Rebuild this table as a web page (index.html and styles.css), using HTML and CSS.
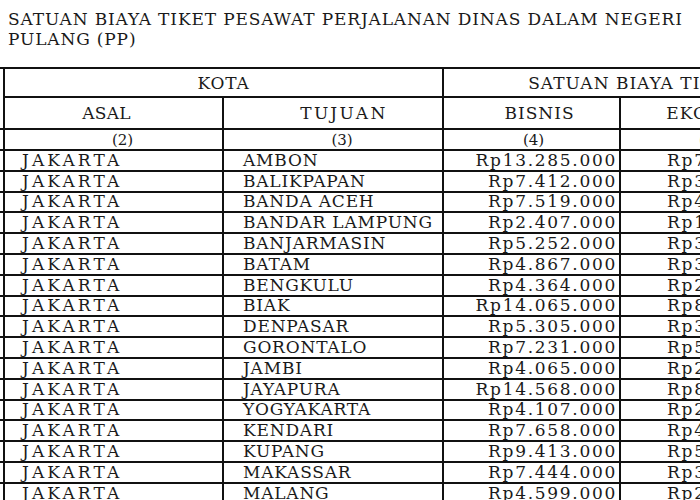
FILE: index.html
```html
<!DOCTYPE html>
<html lang="id">
<head>
<meta charset="utf-8">
<title>Satuan Biaya Tiket Pesawat</title>
<link rel="stylesheet" href="styles.css">
</head>
<body>
<h1 class="title">SATUAN BIAYA TIKET PESAWAT PERJALANAN DINAS DALAM NEGERI<br>PULANG (PP)</h1>
<table class="sbm">
<colgroup>
<col class="c-no"><col class="c-asal"><col class="c-tujuan"><col class="c-bisnis"><col class="c-ekonomi">
</colgroup>
<thead>
<tr class="h1"><th rowspan="2">NO.</th><th colspan="2" class="kota">KOTA</th><th colspan="2" class="sbt">SATUAN BIAYA TIKET</th></tr>
<tr class="h2"><th class="asal">ASAL</th><th class="tujuan">TUJUAN</th><th class="bisnis">BISNIS</th><th class="eko">EKONOMI</th></tr>
<tr class="h3"><th>(1)</th><th class="n2">(2)</th><th class="n3">(3)</th><th class="n4">(4)</th><th class="n5">(5)</th></tr>
</thead>
<tbody>
<tr><td>1</td><td>JAKARTA</td><td>AMBON</td><td>Rp13.285.000</td><td>Rp7.460.000</td></tr>
<tr><td>2</td><td>JAKARTA</td><td>BALIKPAPAN</td><td>Rp7.412.000</td><td>Rp3.796.000</td></tr>
<tr><td>3</td><td>JAKARTA</td><td>BANDA ACEH</td><td>Rp7.519.000</td><td>Rp4.674.000</td></tr>
<tr><td>4</td><td>JAKARTA</td><td>BANDAR LAMPUNG</td><td>Rp2.407.000</td><td>Rp1.578.000</td></tr>
<tr><td>5</td><td>JAKARTA</td><td>BANJARMASIN</td><td>Rp5.252.000</td><td>Rp3.046.000</td></tr>
<tr><td>6</td><td>JAKARTA</td><td>BATAM</td><td>Rp4.867.000</td><td>Rp3.010.000</td></tr>
<tr><td>7</td><td>JAKARTA</td><td>BENGKULU</td><td>Rp4.364.000</td><td>Rp2.474.000</td></tr>
<tr><td>8</td><td>JAKARTA</td><td>BIAK</td><td>Rp14.065.000</td><td>Rp8.384.000</td></tr>
<tr><td>9</td><td>JAKARTA</td><td>DENPASAR</td><td>Rp5.305.000</td><td>Rp3.402.000</td></tr>
<tr><td>10</td><td>JAKARTA</td><td>GORONTALO</td><td>Rp7.231.000</td><td>Rp5.034.000</td></tr>
<tr><td>11</td><td>JAKARTA</td><td>JAMBI</td><td>Rp4.065.000</td><td>Rp2.522.000</td></tr>
<tr><td>12</td><td>JAKARTA</td><td>JAYAPURA</td><td>Rp14.568.000</td><td>Rp8.866.000</td></tr>
<tr><td>13</td><td>JAKARTA</td><td>YOGYAKARTA</td><td>Rp4.107.000</td><td>Rp2.442.000</td></tr>
<tr><td>14</td><td>JAKARTA</td><td>KENDARI</td><td>Rp7.658.000</td><td>Rp4.926.000</td></tr>
<tr><td>15</td><td>JAKARTA</td><td>KUPANG</td><td>Rp9.413.000</td><td>Rp5.346.000</td></tr>
<tr><td>16</td><td>JAKARTA</td><td>MAKASSAR</td><td>Rp7.444.000</td><td>Rp3.816.000</td></tr>
<tr><td>17</td><td>JAKARTA</td><td>MALANG</td><td>Rp4.599.000</td><td>Rp2.838.000</td></tr>
<tr><td>18</td><td>JAKARTA</td><td>MANADO</td><td>Rp8.720.000</td><td>Rp4.858.000</td></tr>
</tbody>
</table>
</body>
</html>
```

FILE: styles.css
```css
html, body {
  margin: 0;
  padding: 0;
  background: #ffffff;
  overflow: hidden;
  width: 700px;
  height: 500px;
}
body {
  font-family: "DejaVu Serif", "Liberation Serif", serif;
  color: #1a1a1a;
}
.title {
  margin: 0;
  padding: 9px 0 0 8px;
  font-size: 17px;
  font-weight: normal;
  line-height: 20px;
  letter-spacing: 0.85px;
  white-space: nowrap;
}
.sbm {
  margin: 18px 0 0 -37px;
  border-collapse: collapse;
  table-layout: fixed;
  width: 835px;
  font-size: 17px;
}
.c-no { width: 40px; }
.c-asal { width: 219px; }
.c-tujuan { width: 220px; }
.c-bisnis { width: 177px; }
.c-ekonomi { width: 179px; }
.sbm th, .sbm td {
  border: 2px solid #111;
  padding: 0;
  white-space: nowrap;
  overflow: hidden;
}
.sbm th {
  font-weight: normal;
  text-align: center;
}
.h1 th { height: 27px; }
.h2 th { height: 30px; }
.h3 th { height: 19px; font-size: 15px; }
.kota { letter-spacing: 0.75px; }
.sbt { letter-spacing: 1px; padding-left: 26px !important; }
.asal { letter-spacing: 0.3px; padding-right: 14px !important; }
.tujuan { letter-spacing: 2.4px; padding-left: 22px !important; }
.bisnis { letter-spacing: 1px; padding-left: 16px !important; }
.eko { letter-spacing: 1px; padding-left: 12px !important; }
.n2 { padding-left: 18px !important; }
.n3 { padding-left: 18px !important; }
.n4 { padding-left: 4px !important; }
.sbm td { height: 18.8px; line-height: 17px; }
.sbm td:nth-child(2) { padding-left: 17px; letter-spacing: 3.1px; }
.sbm td:nth-child(3) { padding-left: 19px; letter-spacing: 0.8px; }
.sbm td:nth-child(4), .sbm td:nth-child(5) { text-align: right; padding-right: 2px; letter-spacing: 1.7px; }
```
